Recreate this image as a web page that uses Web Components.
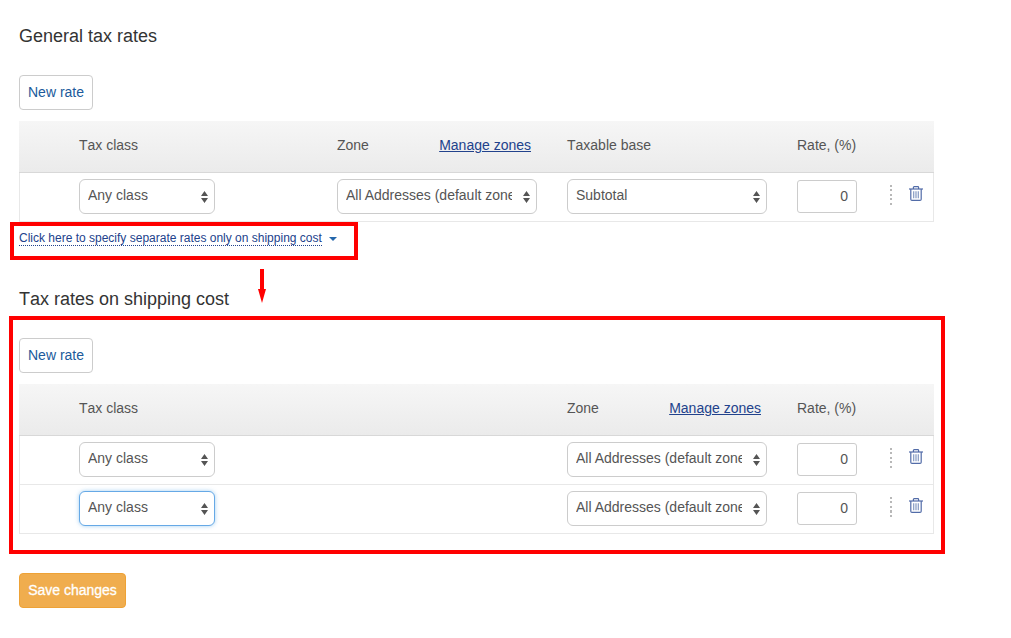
<!DOCTYPE html>
<html>
<head>
<meta charset="utf-8">
<style>
  html, body { margin: 0; background: #fff; }
  body { font-family: "Liberation Sans", Arial, sans-serif; color: #333; }
</style>
</head>
<body>
<tax-page>
  <section-title style="--top:26px">General tax rates</section-title>
  <new-rate style="--top:29px"></new-rate>
  <tax-table style="--top:11px" cols="60px 258px 230px 230px 1fr" base="1" rows="1"></tax-table>
  <shipping-link></shipping-link>
  <section-title style="--top:43px">Tax rates on shipping cost</section-title>
  <new-rate style="--top:29px"></new-rate>
  <tax-table style="--top:11px" cols="60px 488px 230px 1fr" rows="2"></tax-table>
  <save-button></save-button>
  <red-box style="left:10px;top:222px;width:348px;height:38px"></red-box>
  <red-box style="left:9px;top:316px;width:936px;height:238px"></red-box>
  <red-arrow></red-arrow>
</tax-page>

<script>
const trashIcon = /* html */ `
  <svg width="14" height="15" viewBox="0 0 14 15" fill="none" stroke="#526ca8" stroke-width="1.2">
    <path d="M0 3h14"/>
    <path d="M4.4 3V1.4q0-.8.8-.8h3.6q.8 0 .8.8V3"/>
    <path d="M1.8 3v10.2q0 1.2 1.2 1.2h8q1.2 0 1.2-1.2V3"/>
    <path d="M4.7 5.2v7M7 5.2v7M9.3 5.2v7" stroke="#8499c2" stroke-width="1.2"/>
  </svg>`;

class taxPage extends HTMLElement {
  connectedCallback() {
    this.attachShadow({ mode: "open" }).innerHTML = /* html */ `
      <style>
        :host { display: block; position: relative; height: 638px; padding: 0 77px 0 19px; box-sizing: border-box; overflow: hidden; }
      </style>
      <slot></slot>`;
  }
}

class sectionTitle extends HTMLElement {
  connectedCallback() {
    this.attachShadow({ mode: "open" }).innerHTML = /* html */ `
      <style>
        :host { display: block; margin-top: var(--top, 0); font-size: 18px; line-height: 20px; color: #333; font-kerning: none; }
      </style>
      <slot></slot>`;
  }
}

class newRate extends HTMLElement {
  connectedCallback() {
    this.attachShadow({ mode: "open" }).innerHTML = /* html */ `
      <style>
        :host { display: block; margin-top: var(--top, 0); }
        button {
          display: block; width: 74px; height: 35px; padding: 0 0 2px; box-sizing: border-box;
          background: #fff; border: 1px solid #ccc; border-radius: 4px;
          font: 14px "Liberation Sans", Arial, sans-serif; color: #205a9b;
        }
      </style>
      <button>New rate</button>`;
  }
}

class fakeSelect extends HTMLElement {
  connectedCallback() {
    this.attachShadow({ mode: "open" }).innerHTML = /* html */ `
      <style>
        :host { display: block; width: var(--w, 200px); }
        .box {
          position: relative; height: 35px; box-sizing: border-box; padding: 0 24px 3px 8px;
          display: flex; align-items: center;
          background: #fff; border: 1px solid #ccc; border-radius: 6px;
          font-size: 14px; color: #555; white-space: nowrap; overflow: hidden;
        }
        :host([focused]) .box { border-color: #66a9e6; box-shadow: 0 0 4px rgba(102,175,233,.6); }
        .text { overflow: hidden; }
        svg { position: absolute; right: 6px; top: 10px; }
      </style>
      <div class="box">
        <span class="text"><slot></slot></span>
        <svg width="7" height="14" viewBox="0 0 7 14" fill="#555"><path d="M3.5 1L7 6H0zM3.5 13L0 8h7z"/></svg>
      </div>`;
  }
}

class taxRow extends HTMLElement {
  connectedCallback() {
    const base = this.hasAttribute("base");
    const focused = this.hasAttribute("focused") ? "focused" : "";
    this.attachShadow({ mode: "open" }).innerHTML = /* html */ `
      <style>
        :host { display: grid; grid-template-columns: var(--cols); align-items: start; padding: 6px 0 7px; border-bottom: 1px solid #e8e8e8; }
        .rate {
          width: 60px; height: 33px; margin-top: 1px; box-sizing: border-box; text-align: right; padding: 0 8px 0 0;
          line-height: 30px; background: #fff; border: 1px solid #ccc; border-radius: 3px; font-size: 14px; color: #555;
        }
        .last { display: flex; align-items: flex-start; }
        .dots {
          margin: 6px 0 0 33px; width: 2px; height: 22px;
          background: repeating-linear-gradient(#b8b8b8 0 2px, transparent 2px 4.5px);
        }
        .trash { margin: 7px 0 0 17px; display: flex; }
        .cell { display: flex; }
      </style>
      <div></div>
      <div class="cell"><fake-select ${focused} style="--w:136px">Any class</fake-select></div>
      <div class="cell"><fake-select style="--w:200px">All Addresses (default zone)</fake-select></div>
      ${base ? `<div class="cell"><fake-select style="--w:200px">Subtotal</fake-select></div>` : ""}
      <div class="last"><div class="rate">0</div><span class="dots"></span><span class="trash">${trashIcon}</span></div>`;
  }
}

class taxTable extends HTMLElement {
  connectedCallback() {
    const base = this.hasAttribute("base");
    const rows = Number(this.getAttribute("rows"));
    let body = "";
    for (let i = 0; i < rows; i++) {
      body += `<tax-row ${base ? "base" : ""} ${i === 1 ? "focused" : ""}></tax-row>`;
    }
    this.attachShadow({ mode: "open" }).innerHTML = /* html */ `
      <style>
        :host { display: block; margin-top: var(--top, 0); width: 915px; --cols: ${this.getAttribute("cols")}; }
        .head {
          display: grid; grid-template-columns: var(--cols); align-items: center; height: 52px; box-sizing: border-box;
          padding-bottom: 3px;
          background: linear-gradient(#f6f6f6, #ebebeb); border-bottom: 1px solid #d8d8d8;
          font-size: 14px; color: #555; font-kerning: none;
        }
        .zone { display: flex; justify-content: space-between; width: 194px; }
        .zone a { color: #22428c; text-decoration: underline; }
        .body { border: 1px solid #e8e8e8; border-width: 0 1px; }
        .body tax-row { margin: 0 -1px; }
      </style>
      <div class="head">
        <div></div>
        <div>Tax class</div>
        <div class="zone"><span>Zone</span><a>Manage zones</a></div>
        ${base ? `<div>Taxable base</div>` : ""}
        <div>Rate, (%)</div>
      </div>
      <div class="body">${body}</div>`;
  }
}

class shippingLink extends HTMLElement {
  connectedCallback() {
    this.attachShadow({ mode: "open" }).innerHTML = /* html */ `
      <style>
        :host { display: flex; align-items: center; gap: 7px; margin-top: 10px; height: 14px; font-size: 12px; color: #22428c; }
        a { line-height: 13px; border-bottom: 1px dotted #22428c; }
        i { width: 0; height: 0; border: 4px solid transparent; border-top-color: #2467ab; border-bottom: 0; }
      </style>
      <a>Click here to specify separate rates only on shipping cost</a><i></i>`;
  }
}

class saveButton extends HTMLElement {
  connectedCallback() {
    this.attachShadow({ mode: "open" }).innerHTML = /* html */ `
      <style>
        :host { display: block; margin-top: 39px; }
        button {
          display: block; width: 107px; height: 35px; padding: 0 0 2px; box-sizing: border-box;
          background: #f0ad4e; border: 1px solid #eea236; border-radius: 4px;
          font: 14px "Liberation Sans", Arial, sans-serif; color: #fff; -webkit-text-stroke: .3px #fff;
        }
      </style>
      <button>Save changes</button>`;
  }
}

class redBox extends HTMLElement {
  connectedCallback() {
    this.attachShadow({ mode: "open" }).innerHTML = /* html */ `
      <style>
        :host { position: absolute; box-sizing: border-box; border: 4px solid #f00; pointer-events: none; }
      </style>`;
  }
}

class redArrow extends HTMLElement {
  connectedCallback() {
    this.attachShadow({ mode: "open" }).innerHTML = /* html */ `
      <style>
        :host { position: absolute; left: 258px; top: 269px; width: 8px; height: 34px; }
        svg { display: block; }
      </style>
      <svg width="8" height="34" viewBox="0 0 8 34" fill="#f00"><path d="M2 0h4v20h2L4 34 0 20h2z"/></svg>`;
  }
}

customElements.define("fake-select", fakeSelect);
customElements.define("tax-row", taxRow);
customElements.define("tax-table", taxTable);
customElements.define("new-rate", newRate);
customElements.define("section-title", sectionTitle);
customElements.define("shipping-link", shippingLink);
customElements.define("save-button", saveButton);
customElements.define("red-box", redBox);
customElements.define("red-arrow", redArrow);
customElements.define("tax-page", taxPage);
</script>
</body>
</html>
